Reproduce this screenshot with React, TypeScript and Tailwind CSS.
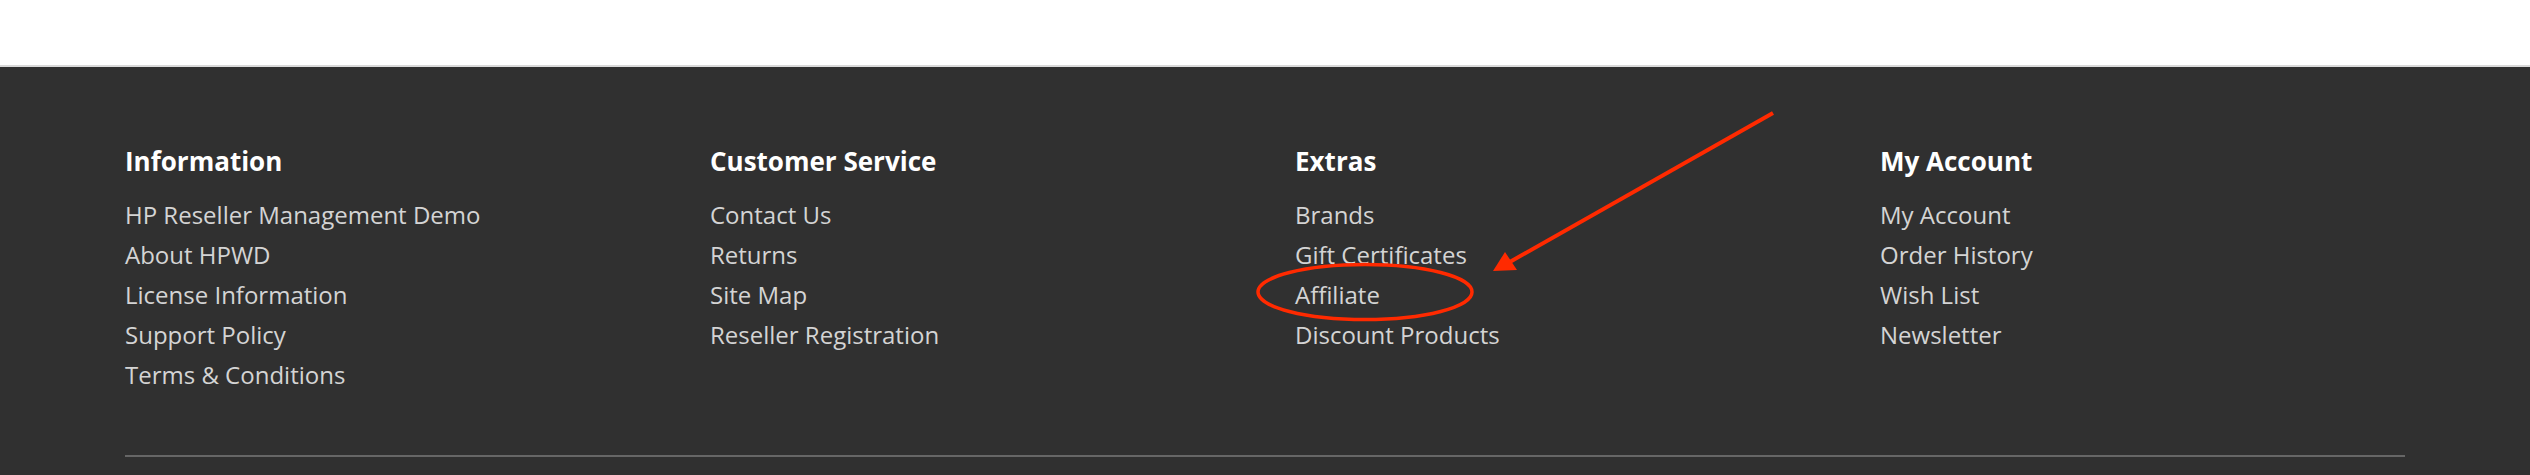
import React from "react";

const columns = [
  {
    title: "Information",
    links: [
      "HP Reseller Management Demo",
      "About HPWD",
      "License Information",
      "Support Policy",
      "Terms & Conditions",
    ],
  },
  {
    title: "Customer Service",
    links: ["Contact Us", "Returns", "Site Map", "Reseller Registration"],
  },
  {
    title: "Extras",
    links: ["Brands", "Gift Certificates", "Affiliate", "Discount Products"],
  },
  {
    title: "My Account",
    links: ["My Account", "Order History", "Wish List", "Newsletter"],
  },
];

export default function App() {
  return (
    <div className="relative w-[2530px] h-[475px] overflow-hidden bg-white font-['Open_Sans',sans-serif]">
      <div className="h-[65px] bg-white" />
      <footer className="border-t-2 border-[#d9d9d9] bg-[#303030] pt-[76px] pb-[40px]">
        <div className="mx-auto w-[2280px]">
          <div className="grid grid-cols-[585px_585px_585px_1fr]">
            {columns.map((col) => (
              <div key={col.title}>
                <h5 className="text-[26px] leading-[36px] font-bold text-white">
                  {col.title}
                </h5>
                <ul className="mt-[16px]">
                  {col.links.map((l) => (
                    <li
                      key={l}
                      className="text-[24px] leading-[40px] text-[#d4d4d4]"
                    >
                      {l}
                    </li>
                  ))}
                </ul>
              </div>
            ))}
          </div>
          <hr className="mt-[60px] border-0 h-[2px] bg-[#666666]" />
        </div>
      </footer>
      <svg
        className="absolute left-0 top-0 pointer-events-none"
        width="2530"
        height="475"
        viewBox="0 0 2530 475"
      >
        <line
          x1="1773"
          y1="113"
          x2="1508"
          y2="263"
          stroke="#ff2a00"
          strokeWidth="4"
        />
        <polygon points="1493,271 1505,252 1517,270" fill="#ff2a00" />
        <ellipse
          cx="1365"
          cy="292"
          rx="107"
          ry="27.5"
          fill="none"
          stroke="#ff2a00"
          strokeWidth="3.5"
        />
      </svg>
    </div>
  );
}
